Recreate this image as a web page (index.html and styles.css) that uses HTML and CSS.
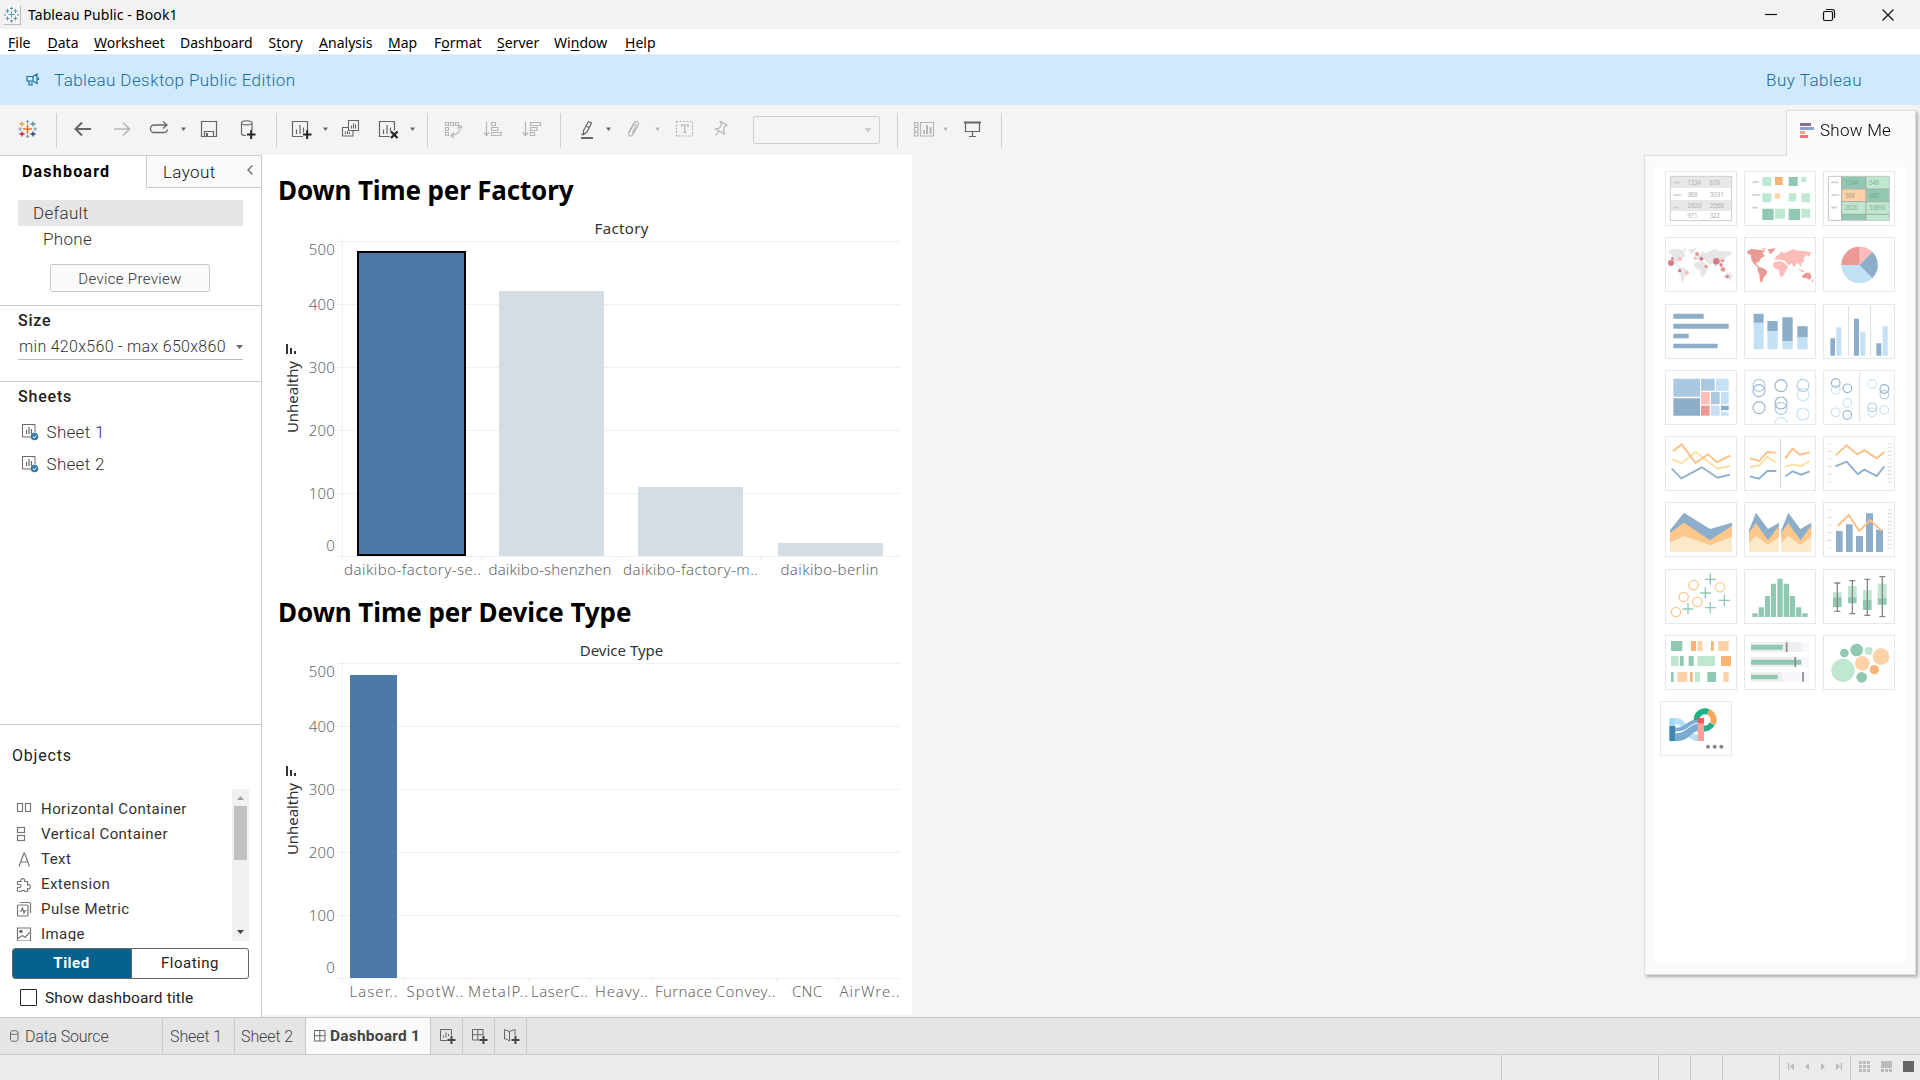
FILE: index.html
```
<!DOCTYPE html>
<html lang="en">
<head>
<meta charset="utf-8">
<title>Tableau Public - Book1</title>
<link rel="stylesheet" href="styles.css">
</head>
<body>
<svg width="0" height="0" class="defs">
  <defs>
    <path id="americas" d="M10 42L22 36 45 38 64 41 55 48 63 57 52 63 46 72 47 76 38 75 37 82 46 90 42 92 30 80 22 68 21 54 10 50ZM50 35L66 34 62 38ZM70 37L95 34 88 44 78 52 74 42ZM42 90L56 92 70 102 66 114 58 122 54 138 48 132 46 112 40 100Z"/>
    <path id="oldworld" d="M92 68L96 58 106 52 112 42 120 48 130 44 150 36 160 41 178 42 203 46 198 52 196 60 188 54 180 62 180 74 172 78 170 90 164 80 158 78 150 92 142 78 136 86 128 78 120 70 108 68ZM90 76L110 72 124 80 132 90 124 106 116 119 109 119 104 98 90 92 86 84ZM162 94L172 104 184 106 180 102 168 96Z"/>
    <path id="oceania" d="M174 116L188 106 192 110 196 105 203 120 196 129 188 123 176 123ZM206 126L209 130 202 137Z"/>
    <g id="mark" fill="none" stroke-width="1.3">
      <path d="M27.5 124.500v9M23 129h9" stroke="#e8762c" stroke-width="1.700"/>
      <path d="M22 121.500v5M19.500 124h5" stroke="#e5a04c"/><path d="M33 121.500v5M30.500 124h5" stroke="#59879b"/>
      <path d="M22 131.500v5M19.500 134h5" stroke="#c72035"/><path d="M33 131.500v5M30.500 134h5" stroke="#1f457e"/>
      <path d="M27.500 120v3.500M25.800 121.700h3.500M27.500 134.500v3.500M25.800 136.300h3.500M20 127.300v3.500M18.500 129h3.500M35 127.300v3.500M33.500 129h3.500" stroke="#7199a6" stroke-width="1"/>
    </g>
    <g id="sheetIcon">
      <path d="M32 438h-9.500v-12.500h12.500v8" fill="none" stroke="#666"/>
      <path d="M26.500 431v4M29 428v7M31.500 430v5" stroke="#666" stroke-width="1.200"/>
      <circle cx="34.500" cy="437.500" r="3.800" fill="#3a7ca5"/><path d="M32.700 437.500l1.400 1.400 2.400-2.600" fill="none" stroke="#fff"/>
    </g>
    <path id="plus" d="M0 4.500h8M4 .5v8" stroke="#444" stroke-width="2"/>
  </defs>
</svg>

<header class="titlebar">
  <svg class="app-icon" width="18" height="20" viewBox="0 0 18 20"><rect width="17" height="19" fill="#f5f5f5"/><path d="M17.500 1v18.500H1" fill="none" stroke="#bbb"/><path d="M8.500 6.500v6M5.500 9.500h6M4.500 4v4M2.500 6h4M12.500 4v4M10.500 6h4M4.500 11.500v4M2.500 13.500h4M12.500 11.500v4M10.500 13.500h4M8.500 2v2.500M7 3.500h3M8.500 15v2.500M7 16h3M2 8.500v2.500M15 8.500v2.500" stroke="#5797b8" fill="none"/></svg>
  <span class="title">Tableau Public - Book1</span>
  <svg class="window-controls" width="155" height="28" viewBox="1765 0 155 28" fill="none" stroke="#111" stroke-width="1.200"><path d="M1765 13.500h12"/><rect x="1823.500" y="10.500" width="9" height="9" rx="1.500"/><path d="M1826 8.500h6a2.500 2.500 0 0 1 2.500 2.500v6"/><path d="M1882.500 8.500l11 11M1893.500 8.500l-11 11"/></svg>
</header>

<nav class="menubar">
  <span style="width:39.500px"><u>F</u>ile</span><span style="width:46.500px"><u>D</u>ata</span><span style="width:86px"><u>W</u>orksheet</span><span style="width:88.500px">Dash<u>b</u>oard</span><span style="width:50.500px">S<u>t</u>ory</span><span style="width:69px"><u>A</u>nalysis</span><span style="width:46px"><u>M</u>ap</span><span style="width:63px">F<u>o</u>rmat</span><span style="width:57px"><u>S</u>erver</span><span style="width:71px">Wi<u>n</u>dow</span><span><u>H</u>elp</span>
</nav>

<div class="banner">
  <svg width="14" height="14" viewBox="0 0 14 14" fill="none" stroke="#1b6f96" stroke-width="1.200"><path d="M1 3.500h6l4-2.500v9.500l-4-2.500H1zM3 8.500v3.500h3v-3M7 3.500v5M12.500 4.500v2.500"/></svg>
  <span class="banner-name">Tableau Desktop Public Edition</span>
  <span class="buy">Buy Tableau</span>
</div>

<div class="toolbar">
  <div class="group"><svg width="56" height="35" viewBox="0 113 56 35"><use href="#mark"/></svg></div>
  <div class="group">
    <svg width="45" height="35" viewBox="57 113 45 35" fill="none" stroke="#666" stroke-width="2"><path d="M75.500 129H91M82 122.500l-6.500 6.500 6.500 6.500"/></svg>
    <svg width="38" height="35" viewBox="102 113 38 35" fill="none" stroke="#b5b5b5" stroke-width="1.600"><path d="M114 129h15.500M123 122.500l6.500 6.500-6.500 6.500"/></svg>
    <svg width="52" height="35" viewBox="140 113 52 35" fill="none" stroke="#666" stroke-width="1.300"><path d="M165 132.500h-11a3.500 3.500 0 0 1-3.500-3.500v-.5a3.500 3.500 0 0 1 3.500-3.500h12.500M163 121.500l4 3.500-4 3.500M165 132.500a3.500 3.500 0 0 0 2.500-3"/><path d="M181 127.500h5l-2.500 3.500z" fill="#666" stroke="none"/></svg>
    <svg width="36" height="35" viewBox="192 113 36 35" fill="none" stroke="#666" stroke-width="1.200"><path d="M201.500 121.500h15v15h-15zM204.500 136.500v-5h9v5"/><path d="M207 133v3" stroke-width="2"/></svg>
    <svg width="48" height="35" viewBox="228 113 48 35" fill="none" stroke="#666" stroke-width="1.200"><path d="M252 130v-7c0-3-10.500-3-10.500 0v10.500c0 1.500 2 2 4.500 2M241.500 123c0 2.500 10.500 2.500 10.500 0"/><path d="M247 134.500h8.500M251.200 130v9" stroke="#222" stroke-width="2"/></svg>
  </div>
  <div class="group">
    <svg width="57" height="35" viewBox="277 113 57 35" fill="none" stroke="#666" stroke-width="1.200"><path d="M303 136.500h-10.500v-15h15v9M296.500 129.500v4.500M300 125v9M303.500 127.500v5"/><path d="M303 134.500h8.500M307.200 130v9" stroke="#222" stroke-width="2"/><path d="M323 127.500h5l-2.500 3.500z" fill="#666" stroke="none"/></svg>
    <svg width="36" height="35" viewBox="334 113 36 35" fill="none" stroke="#666" stroke-width="1.100"><path d="M348.500 120.500h10v10h-10zM348 127.500h-5.500v8.500h10.500v-5M351.500 125.500v3M353.500 123.500v5M355.500 124.500v4M345.500 131.500v2.500M347.500 131v3M349.500 132v2"/></svg>
    <svg width="57" height="35" viewBox="370 113 57 35" fill="none" stroke="#666" stroke-width="1.200"><path d="M390 136.500h-10.500v-15h15v9M383.500 129.500v4.500M387 125v9M390.500 127.500v4"/><path d="M391 131.500l6.500 6.500M397.500 131.500l-6.500 6.500" stroke="#222" stroke-width="2.200"/><path d="M410 127.500h5l-2.500 3.500z" fill="#666" stroke="none"/></svg>
  </div>
  <div class="group">
    <svg width="46" height="35" viewBox="428 113 46 35" fill="none" stroke="#b5b5b5" stroke-width="1.100"><path d="M445.500 122.500h3v3h-3zM450.500 122.500h3v3h-3zM455.500 122.500h3v3h-3zM445.500 127.500h3v3h-3zM445.500 132.500h3v3h-3zM460.500 126c0 6-3 9-9 9.500M457.500 128.500l3-3 2 3M454 132.500l-3 3 3 2.500"/></svg>
    <svg width="38" height="35" viewBox="474 113 38 35" fill="none" stroke="#b5b5b5" stroke-width="1.200"><path d="M486.500 122v13M484 132.500l2.500 3 2.500-3M491.500 122.500h4v3h-4zM491.500 127.500h6.500v3h-6.500zM491.500 132.500h9.500v3h-9.500z"/></svg>
    <svg width="48" height="35" viewBox="512 113 48 35" fill="none" stroke="#b5b5b5" stroke-width="1.200"><path d="M525.500 122v13M523 132.500l2.500 3 2.500-3M530.500 122.500h10v3h-10zM530.500 127.500h6.500v3h-6.500zM530.500 132.500h4v3h-4z"/></svg>
  </div>
  <div class="group">
    <svg width="57" height="35" viewBox="561 113 57 35" fill="none" stroke="#666" stroke-width="1.200"><path d="M583.500 130.500l5-9 3 1.500-4.500 9-3.500 2.500zM586 126l3 1.500M584 133l-2.500 2"/><path d="M581 138h12" stroke-width="2"/><path d="M606 127.500h5l-2.500 3.500z" fill="#666" stroke="none"/></svg>
    <svg width="50" height="35" viewBox="618 113 50 35" fill="none" stroke="#b5b5b5" stroke-width="1.200"><path d="M628.500 132.500l5-9c2-4 6.500-1.500 4.500 2l-5 9c-2 3-5.500 1.500-4-1.500l4.500-8c1.500-2 3.500-.5 2.500 1l-4 7.500"/><path d="M655 127.500h5l-2.500 3.500z" fill="#b5b5b5" stroke="none"/></svg>
    <svg width="36" height="35" viewBox="668 113 36 35" fill="none" stroke="#b5b5b5" stroke-width="1.200"><path d="M676.500 121.500h16v14.500h-16z" stroke-dasharray="2 1.300"/><path d="M681.500 127v-2h6.500v2M684.700 125v7.500M683 132.500h3.500"/></svg>
    <svg width="36" height="35" viewBox="704 113 36 35" fill="none" stroke="#b5b5b5" stroke-width="1.200"><path d="M720.500 121.500l6.500 3.500-2 1-1.500 3.500 1 4.500-3.500-2-5.500-3 4-1 2-3.500zM719 131l-3.500 4.500"/></svg>
    <div class="fit-select"><svg width="8" height="5" viewBox="0 0 8 5"><path d="M.5 0h7L4 4.500z" fill="#ccc"/></svg></div>
  </div>
  <div class="group">
    <svg width="58" height="35" viewBox="898 113 58 35" fill="none" stroke="#b5b5b5" stroke-width="1.200"><path d="M914.500 122.500h3.500v3.500h-3.500zM914.500 127.500h3.500v3.500h-3.500zM914.500 132.500h3.500v3.500h-3.500zM920.500 122.500h13v13.500h-13z"/><path d="M924 130v4M927 125v9M930.500 127v7" stroke-width="2"/><path d="M943 127.500h5l-2.500 3.500z" fill="#b5b5b5" stroke="none"/></svg>
    <svg width="45" height="35" viewBox="956 113 45 35" fill="none" stroke="#666" stroke-width="1.200"><path d="M965.500 123v8.500h14V123M972.500 131.500v5M969 136.500h7"/><path d="M964 122.500h17" stroke-width="2"/></svg>
  </div>
</div>

<div class="workspace">
  <aside class="side">
    <div class="side-tabs"><div class="tab-on">Dashboard</div><div class="tab-off">Layout<svg width="7" height="10" viewBox="0 0 7 10" fill="none" stroke="#666" stroke-width="1.300"><path d="M5.500.5L1 5l4.500 4.500"/></svg></div></div>
    <section class="devices">
      <div class="device on">Default</div><div class="device phone">Phone</div>
      <div class="preview">Device Preview</div>
    </section>
    <section class="size"><h3>Size</h3><div class="size-select">min 420x560 - max 650x860<svg width="7" height="4" viewBox="0 0 7 4"><path d="M0 0h7L3.500 4z" fill="#666"/></svg></div></section>
    <section class="sheets"><h3>Sheets</h3>
      <div class="sheet"><svg width="18" height="18" viewBox="21 424 18 18"><use href="#sheetIcon"/></svg>Sheet 1</div>
      <div class="sheet"><svg width="18" height="18" viewBox="21 424 18 18"><use href="#sheetIcon"/></svg>Sheet 2</div>
    </section>
    <section class="objects"><h3>Objects</h3>
      <div class="object-list">
        <div class="items">
          <div><svg width="16" height="16" viewBox="0 0 16 16"><rect x="1.500" y="2.500" width="5" height="8"/><rect x="9.500" y="2.500" width="5" height="8"/></svg>Horizontal Container</div>
          <div><svg width="16" height="16" viewBox="0 0 16 16"><rect x="1.500" y="1.500" width="7" height="5"/><rect x="1.500" y="9.500" width="7" height="5"/></svg>Vertical Container</div>
          <div><svg width="16" height="16" viewBox="0 0 16 16"><path d="M3 15.500L8 2h.5l5 13.500M4.800 11h7"/></svg>Text</div>
          <div><svg width="16" height="16" viewBox="0 0 16 16"><path d="M1.500 15V11.500h2a1.500 1.500 0 1 0 0-3h-2V5.500h3.500a2 2 0 1 1 3.500 0h3v3.500a2 2 0 1 1 0 3.500V15.500H9a2 2 0 0 0-3.500 0z"/></svg>Extension</div>
          <div><svg width="16" height="16" viewBox="0 0 16 16"><path d="M4 1.500h9.500q1 0 1 1V12M2.500 4H11q1 0 1 1v9q0 1-1 1H2.500q-1 0-1-1V5q0-1 1-1zM3.500 10h1.800l1.200-3 1.500 5 1-2.500h1.500"/></svg>Pulse Metric</div>
          <div><svg width="16" height="16" viewBox="0 0 16 16"><path d="M1.500 2h13v13h-13zM2 12.500L6.500 9.500l2.500 2 4.500-5"/><circle cx="5" cy="5.500" r="1.200" fill="#666"/></svg>Image</div>
        </div>
        <div class="scroll"><svg width="7" height="4" viewBox="0 0 7 4"><path d="M0 4h7L3.500 0z" fill="#a0a0a0"/></svg><div class="thumb"></div><svg width="7" height="4" viewBox="0 0 7 4"><path d="M0 0h7L3.500 4z" fill="#444"/></svg></div>
      </div>
      <div class="mode"><div class="tiled">Tiled</div><div class="floating">Floating</div></div>
      <label class="show-title"><span class="box"></span>Show dashboard title</label>
    </section>
  </aside>

  <main class="dashboard">
    <svg class="viz" width="650" height="428" viewBox="262 155 650 428">
      <text class="viz-title" x="278" y="200" textLength="295.500">Down Time per Factory</text>
      <text class="head" x="621.500" y="234" textLength="54">Factory</text>
      <path class="grid" d="M337 241.500H900M337 304.500H900M337 367.500H900M337 430.500H900M337 493.500H900M337 556.500H900M342.500 238V560M481.500 556V560M621.500 556V560M760.500 556V560"/>
      <rect x="358" y="252" width="107" height="303" fill="#4e79a7" stroke="#000" stroke-width="2"/>
      <rect x="499" y="291" width="105" height="265" fill="#d5dde4"/><rect x="638" y="487" width="105" height="69" fill="#d5dde4"/><rect x="778" y="543" width="105" height="13" fill="#d5dde4"/>
      <g class="ticks"><text x="335" y="255">500</text><text x="335" y="310">400</text><text x="335" y="373">300</text><text x="335" y="436">200</text><text x="335" y="499">100</text><text x="335" y="551">0</text></g>
      <text class="axis" transform="translate(298 433) rotate(-90)" textLength="72">Unhealthy</text><path d="M287 344v10M291 348v6M295 351v3" stroke="#333" stroke-width="2"/>
      <g class="labels"><text x="412.500" y="575" textLength="137">daikibo-factory-se..</text><text x="550" y="575" textLength="123">daikibo-shenzhen</text><text x="690.500" y="575" textLength="135">daikibo-factory-m..</text><text x="829.500" y="575" textLength="98">daikibo-berlin</text></g>
    </svg>
    <svg class="viz" width="650" height="432" viewBox="262 161 650 432">
      <text class="viz-title" x="278" y="200" textLength="353.500">Down Time per Device Type</text>
      <text class="head" x="621.500" y="234" textLength="83.500">Device Type</text>
      <path class="grid" d="M337 241.500H900M337 304.500H900M337 367.500H900M337 430.500H900M337 493.500H900M337 556.500H900M342.500 238V560M404.500 556V560M466.500 556V560M528.500 556V560M590.500 556V560M652.500 556V560M714.500 556V560M776.500 556V560M838.500 556V560"/>
      <rect x="350" y="253" width="47" height="303" fill="#4e79a7"/>
      <g class="ticks"><text x="335" y="255">500</text><text x="335" y="310">400</text><text x="335" y="373">300</text><text x="335" y="436">200</text><text x="335" y="499">100</text><text x="335" y="551">0</text></g>
      <text class="axis" transform="translate(298 433) rotate(-90)" textLength="72">Unhealthy</text><path d="M287 344v10M291 348v6M295 351v3" stroke="#333" stroke-width="2"/>
      <g class="labels"><text x="373.500" y="575" textLength="48">Laser..</text><text x="435" y="575" textLength="57">SpotW..</text><text x="498" y="575" textLength="60">MetalP..</text><text x="559.500" y="575" textLength="57">LaserC..</text><text x="621.500" y="575" textLength="53">Heavy..</text><text x="683.500" y="575" textLength="57">Furnace</text><text x="745.500" y="575" textLength="60">Convey..</text><text x="807" y="575" textLength="30">CNC</text><text x="869.500" y="575" textLength="60">AirWre..</text></g>
    </svg>
  </main>
</div>

<aside class="showme">
  <div class="showme-tab"><svg width="14" height="15" viewBox="0 0 14 15"><path d="M0 0h11v3H0z" fill="#8a6d9b"/><path d="M0 4h14v3H0z" fill="#7fa8d1"/><path d="M0 8h5v3H0z" fill="#f2a47c"/><path d="M0 12h8v3H0z" fill="#fa6e7c"/></svg><span>Show Me</span></div>
  <div class="showme-panel"><div class="gallery">
    <svg viewBox="0 0 216 165"><rect x="16" y="16" width="184" height="133" fill="#fff" stroke="#ccc" stroke-width="3"/><path d="M18 18h180v33H18zM18 87h180v33H18z" fill="#e8e8e8"/><path d="M25 34h20M25 72h24M25 110h16" stroke="#ccc" stroke-width="5"/><g class="cell"><text x="67" y="42" textLength="40">1234</text><text x="134" y="42">678</text><text x="67" y="77">368</text><text x="134" y="77" textLength="42">3031</text><text x="67" y="112" textLength="42">2620</text><text x="134" y="112" textLength="42">2568</text><text x="67" y="142">971</text><text x="134" y="142">322</text></g></svg>
    <svg viewBox="0 0 216 165"><path d="M25 33h20M25 72h24M25 110h16" stroke="#ccc" stroke-width="5"/><path d="M55 18h27v27H55zM172 18h14v15h-14zM55 67h27v27H55zM134 67h23v24h-23zM172 67h26v27h-26zM93 113h30v30H93zM172 113h26v27h-26z" fill="#c0e8d1"/><path d="M134 18h27v27h-27zM55 113h34v34H55zM134 113h34v34h-34z" fill="#90c9b1"/><path d="M93 18h23v24H93z" fill="#f6b577"/><path d="M93 67h15v16H93z" fill="#fed2a6"/></svg>
    <svg viewBox="0 0 216 165"><path d="M57 16h72v37H57zM130 54h69v37h-69zM57 130h72v17H57z" fill="#90c9b1"/><path d="M130 16h69v37h-69zM57 92h72v37H57zM130 92h69v55h-69z" fill="#c0e8d1"/><path d="M57 54h72v37H57z" fill="#fed2a6"/><path d="M16 16h183v132H16z" fill="none" stroke="#c4c4c4" stroke-width="3"/><path d="M56 16v132M129 16v132M56 54h143M56 92h143M56 130h143" fill="none" stroke="#9fa8a3" stroke-width="3"/><path d="M25 34h20M25 72h24M25 110h16" stroke="#ccc" stroke-width="5"/><g class="cell green"><text x="65" y="41">1234</text><text x="138" y="41">546</text><text x="65" y="81">368</text><text x="138" y="81">380</text><text x="65" y="118">2620</text><text x="138" y="118">53890</text></g></svg>

    <svg viewBox="0 0 216 165"><g fill="#e6e6e6"><use href="#americas"/><use href="#oldworld"/><use href="#oceania"/></g><g fill="#d87a87"><circle cx="18" cy="78" r="9"/><circle cx="22" cy="65" r="4"/><circle cx="44" cy="101" r="5"/><circle cx="109" cy="65" r="6"/><circle cx="154" cy="73" r="10"/><circle cx="168" cy="84" r="5"/><circle cx="187" cy="119" r="5"/></g><g fill="#eb9995"><circle cx="96" cy="51" r="6"/><circle cx="123" cy="88" r="5"/><circle cx="172" cy="71" r="5"/><circle cx="174" cy="97" r="7"/></g><g fill="#fdbcb9"><circle cx="45" cy="65" r="6"/><circle cx="66" cy="107" r="6"/><circle cx="90" cy="64" r="5"/></g></svg>
    <svg viewBox="0 0 216 165"><use href="#americas" fill="#eb9995"/><use href="#oldworld" fill="#fdbcb9"/><use href="#oceania" fill="#eb9995"/></svg>
    <svg viewBox="0 0 216 165"><circle cx="110" cy="84" r="55" fill="#c4e0f5"/><path d="M110 84V29a55 55 0 0 0-55 55z" fill="#eb9995"/><path d="M110 84V29a55 55 0 0 1 38 16z" fill="#fdbcb9"/><path d="M110 84l38-39a55 55 0 0 1 0 78z" fill="#8daeca"/></svg>

    <svg viewBox="0 0 216 165"><path d="M25 29h91v15H25zM25 59h166v15H25zM25 89h46v14H25zM25 119h133v14H25z" fill="#8daeca"/></svg>
    <svg viewBox="0 0 216 165"><path d="M29 55h30v81H29zM70 81h31v55H70zM115 111h31v25h-31zM160 100h31v36h-31z" fill="#c4e0f5"/><path d="M29 29h30v27H29zM70 51h31v30H70zM115 40h31v71h-31zM160 67h31v33h-31z" fill="#8daeca"/></svg>
    <svg viewBox="0 0 216 165"><path d="M77 6v149M143 6v149" stroke="#ddd" stroke-width="3"/><path d="M22 103h14v52H22zM93 44h15v111H93zM160 118h15v37h-15z" fill="#8daeca"/><path d="M40 70h15v85H40zM112 85h15v70h-15zM179 67h15v88h-15z" fill="#c4e0f5"/></svg>

    <svg viewBox="0 0 216 165"><path d="M25 26h80v54H25zM108 26h41v36h-41zM138 66h26v37h-26z" fill="#aac8e0"/><path d="M25 85h80v52H25zM168 107h23v14h-23z" fill="#8daeca"/><path d="M153 26h38v36h-38zM168 66h23v37h-23zM138 107h26v30h-26zM168 126h23v11h-23z" fill="#c4e0f5"/><path d="M108 66h26v37h-26z" fill="#ffc0bd"/><path d="M108 107h26v30h-26z" fill="#eb9995"/></svg>
    <svg class="rings" viewBox="0 0 216 165"><g stroke="#c4e0f5"><circle cx="177" cy="74" r="18"/><circle cx="177" cy="132" r="18"/><path d="M93 160a18 18 0 0 1 36 0"/></g><g stroke="#a9c9df"><circle cx="45" cy="46" r="18"/><circle cx="111" cy="115" r="18"/><circle cx="177" cy="46" r="18"/></g><g stroke="#8daeca"><circle cx="45" cy="62" r="18"/><circle cx="45" cy="113" r="18"/><circle cx="111" cy="47" r="18"/><circle cx="111" cy="99" r="18"/></g></svg>
    <svg class="rings" viewBox="0 0 216 165"><path d="M110 7v149" stroke="#ddd" stroke-width="3"/><g stroke="#c4e0f5"><circle cx="38" cy="59" r="13"/><circle cx="73" cy="99" r="13"/><circle cx="38" cy="127" r="13"/><circle cx="148" cy="42" r="13"/><circle cx="148" cy="127" r="13"/><circle cx="184" cy="120" r="13"/></g><g stroke="#a9c9df"><circle cx="184" cy="74" r="13"/><circle cx="148" cy="112" r="13"/></g><g stroke="#8daeca"><circle cx="38" cy="39" r="13"/><circle cx="73" cy="55" r="13"/><circle cx="73" cy="135" r="13"/><circle cx="184" cy="57" r="13"/></g></svg>

    <svg class="lines" viewBox="0 0 216 165"><path d="M22 70l28 11 42-33 65 50 38-8" stroke="#fbdf9f"/><path d="M24 46l26-21 42 56 37-26 27 24 39-20" stroke="#fdbf83"/><path d="M20 98l29 29 62-33 47 31 37-9" stroke="#8fb0cc"/></svg>
    <svg class="lines" viewBox="0 0 216 165"><path class="rule" d="M110 7v149"/><path d="M18 93l27-4 25-27 25 17M121 93l25-8 25 5 26-15" stroke="#fbdf9f"/><path d="M18 67l27 8 25-27 27 2M124 67l22-29 22 18 29-7" stroke="#fdbf83"/><path d="M18 121l27 7 25-23h27M124 121l22-15 25 10 26-10" stroke="#8fb0cc"/></svg>
    <svg class="lines" viewBox="0 0 216 165"><path d="M38 58l33-30 32 27 21-12 37 24 23-19" stroke="#fdbf83"/><path d="M37 91l34-14 33 37 20-13 37 19 23-29" stroke="#8fb0cc"/><path class="rule" d="M14 24h11M14 46h11M14 69h11M14 92h11M14 115h11M14 138h11M194 24h12M194 35h12M194 46h12M194 58h12M194 69h12M194 81h12M194 92h12M194 104h12M194 115h12M194 127h12M194 138h12"/></svg>

    <svg viewBox="0 0 216 165"><path d="M15 84l42-52 78 49 66-19v20l-66 40-78-45-42 30z" fill="#8daeca"/><path d="M15 92l42-30 78 53 66-44v38l-66 22-78-18-42 20z" fill="#fbc78a"/><path d="M15 122l42-20 78 27 66-25v46H15z" fill="#fbe9cb"/></svg>
    <svg viewBox="0 0 216 165"><path d="M15 84l21-52 36 49 33-19v20l-33 40-36-50-21 35z" fill="#8daeca"/><path d="M15 92l21-29 36 52 33-44v38l-33 25-36-25-21 30z" fill="#fbc78a"/><path d="M15 122l21-20 36 27 33-25v46H15z" fill="#fbe9cb"/><path d="M112 84l21-52 36 49 33-19v20l-33 40-36-50-21 35z" fill="#8daeca"/><path d="M112 92l21-29 36 52 33-44v38l-33 25-36-25-21 30z" fill="#fbc78a"/><path d="M112 122l21-20 36 27 33-25v46h-90z" fill="#fbe9cb"/></svg>
    <svg class="lines" viewBox="0 0 216 165"><path d="M39 87h20v63H39zM69 67h20v83H69zM99 102h21v48H99zM129 34h21v116h-21zM159 83h21v67h-21z" fill="#8daeca"/><path d="M44 72l33-33 32 48 32-32 34 31" stroke="#fdbf83"/><path class="rule" d="M14 24h11M14 46h11M14 69h11M14 92h11M14 115h11M14 138h11M194 24h12M194 35h12M194 46h12M194 58h12M194 69h12M194 81h12M194 92h12M194 104h12M194 115h12M194 127h12M194 138h12"/></svg>

    <svg viewBox="0 0 216 165" fill="none" stroke-width="4"><g stroke="#fcc993"><circle cx="33" cy="129" r="14"/><circle cx="56" cy="84" r="14"/><circle cx="86" cy="48" r="14"/><circle cx="97" cy="99" r="14"/><circle cx="165" cy="55" r="14"/></g><path d="M136 14v34M120 31h33M121 55v34M105 72h33M178 77v34M161 94h34M69 102v34M52 120h33M136 99v34M120 116h33" stroke="#90c9b1" stroke-width="4"/></svg>
    <svg viewBox="0 0 216 165"><path d="M25 133h16v11H25zM44 115h16v29H44zM63 81h15v63H63zM81 44h15v100H81zM100 29h16v115h-16zM119 44h16v100h-16zM137 81h16v63h-16zM156 115h16v29h-16zM175 133h16v11h-16z" fill="#90c9b1"/></svg>
    <svg viewBox="0 0 216 165"><path d="M30 70h26v15H30zM75 51h26v34H75zM120 63h26v30h-26zM164 44h27v44h-27z" fill="#c0e8d1"/><path d="M30 85h26v29H30zM75 85h26v18H75zM120 93h26v30h-26zM164 88h27v19h-27z" fill="#90c9b1"/><path d="M43 42v85M34 42h18M34 127h18M88 35v99M79 35h18M79 134h18M133 31v108M124 31h18M124 139h18M178 23v120M169 23h18M169 143h18" stroke="#888" stroke-width="4"/></svg>

    <svg viewBox="0 0 216 165"><path d="M18 18h34v30H18zM45 63h11v30H45zM71 63h15v30H71zM18 111h8v30h-8zM127 111h26v30h-26z" fill="#90c9b1"/><path d="M18 63h23v30H18zM97 63h53v30H97zM90 111h15v30H90z" fill="#c0e8d1"/><path d="M78 18h15v30H78zM138 18h8v30h-8zM168 63h30v30h-30zM75 111h8v30h-8z" fill="#f6b577"/><path d="M97 18h15v30H97zM160 18h31v30h-31zM37 111h30v30H37zM175 111h16v30h-16z" fill="#fed2a6"/></svg>
    <svg viewBox="0 0 216 165"><path d="M21 22h174v29H21zM21 66h174v30H21zM21 111h174v29H21z" fill="#f6f8fb"/><path d="M21 22h151v29H21zM21 66h132v30H21zM21 111h94v29H21z" fill="#eee"/><path d="M21 29h95v15H21zM21 74h151v15H21zM21 119h80v14H21z" fill="#90c9b1"/><path d="M128 22v29M154 66v30M177 111v29" stroke="#888" stroke-width="5"/></svg>
    <svg viewBox="0 0 216 165"><g fill="#90c9b1"><circle cx="64" cy="54" r="13"/><circle cx="101" cy="45" r="19"/><circle cx="116" cy="127" r="16"/></g><g fill="#c0e8d1"><circle cx="60" cy="106" r="35"/><circle cx="137" cy="48" r="12"/></g><g fill="#fed2a6"><circle cx="118" cy="85" r="22"/><circle cx="174" cy="65" r="25"/></g><circle cx="154" cy="104" r="14" fill="#f6b577"/></svg>

    <svg class="more" viewBox="0 0 216 165"><path d="M46 60C80 60 80 112 116 112" fill="none" stroke="#b7dff5" stroke-width="18"/><path d="M46 86C82 88 82 60 116 60" fill="none" stroke="#79acd0" stroke-width="12"/><path d="M46 109C90 109 80 78 116 78" fill="none" stroke="#79acd0" stroke-width="24"/><path d="M46 93C84 96 84 68 116 66" fill="none" stroke="#fff" stroke-width="3"/><path d="M28 51h18v24H28z" fill="#a1d9f7"/><path d="M28 75h18v45H28z" fill="#3c87b3"/><g fill="none" stroke-width="18"><path d="M110 57a25 25 0 0 1 35-24M156 68a25 25 0 0 1-31 13" stroke="#27ae88"/><path d="M145 33a25 25 0 0 1 13 35" stroke="#fba55f"/></g><path d="M113 51h19v17h-19z" fill="#ee5a56"/><path d="M113 68h19v52h-19z" fill="#ffa09c"/><g fill="#888"><circle cx="144" cy="137" r="6"/><circle cx="164" cy="137" r="6"/><circle cx="184" cy="137" r="6"/></g></svg>
  </div></div>
</aside>

<div class="tabs">
  <div class="t source"><svg width="9" height="12" viewBox="0 0 9 12"><path d="M.5 2.500c0-2.500 7.500-2.500 7.500 0v7c0 2.500-7.500 2.500-7.500 0zM.5 3c0 2 7.500 2 7.500 0"/></svg>Data Source</div>
  <div class="t s1">Sheet 1</div><div class="t s2">Sheet 2</div>
  <div class="t active"><svg width="12" height="12" viewBox="0 0 12 12"><path d="M.5.5h10.500v10.500H.5zM5.800.5V11M.5 5.700H11"/></svg>Dashboard 1</div>
  <div class="t new"><svg width="16" height="16" viewBox="0 0 16 16"><path d="M7.500 11.500h-7v-11h11v6M3.500 6.500v2M6 3.500v5M8.500 5v2"/><use href="#plus" x="7.500" y="6.500"/></svg></div>
  <div class="t new"><svg width="16" height="16" viewBox="0 0 16 16"><path d="M7.500 11h-7V.5h10.500v6M5.800.5V11M.5 5.700H11"/><use href="#plus" x="7.500" y="6.500"/></svg></div>
  <div class="t new"><svg width="16" height="16" viewBox="0 0 16 16"><path d="M5.500 2.500L.5.500v9.500h2l3 2V2.500L11 .5v6"/><use href="#plus" x="7.500" y="6.500"/></svg></div>
</div>

<footer class="status">
  <i style="width:1502px"></i><i style="width:157px"></i><i style="width:32px"></i><i style="width:32px"></i><i style="width:57px"></i><i style="width:71px"><svg width="70" height="25" viewBox="1780 1055 70 25" fill="#bbb"><path d="M1788 1063h1.300v7h-1.300zM1794 1063v7l-4-3.500zM1809 1063v7l-4-3.500zM1821 1063v7l4-3.500zM1836 1063v7l4-3.500zM1840.700 1063h1.300v7h-1.300z"/></svg></i>
  <svg width="69" height="25" viewBox="1851 1055 69 25" fill="#bbb"><path d="M1859 1061h3v3h-3zM1863 1061h3v3h-3zM1867 1061h3v3h-3zM1859 1065h3v3h-3zM1863 1065h3v3h-3zM1867 1065h3v3h-3zM1859 1069h3v3h-3zM1863 1069h3v3h-3zM1867 1069h3v3h-3zM1881 1061h11v7h-11zM1881 1069h3v3h-3zM1885 1069h3v3h-3zM1889 1069h3v3h-3z"/><path d="M1903 1061h11v11h-11z" fill="#666"/></svg>
</footer>
</body>
</html>
```
FILE: styles.css
```
* { box-sizing: border-box; }
body { margin: 0; width: 1920px; height: 1080px; overflow: hidden; position: relative; display: flex; flex-direction: column; background: #f4f4f4; color: #333; font-family: Roboto, "Open Sans", sans-serif; font-weight: 300; letter-spacing: .3px; white-space: nowrap; }
svg { display: block; flex: none; }
.defs { position: absolute; }
h3 { margin: 0; font-weight: 500; font-size: 16px; letter-spacing: .8px; color: #222; }

.titlebar { height: 29px; flex: none; display: flex; align-items: center; background: #f2f2f2; font: 14px "Noto Sans", sans-serif; letter-spacing: .08px; color: #000; }
.app-icon { margin: 0 7px 0 3px; }
.title { padding-bottom: 1px; }
.window-controls { margin-left: auto; }
.menubar { height: 26px; flex: none; display: flex; padding-left: 8px; background: #fff; border-bottom: 1px solid #eee; font: 14px/27px "Noto Sans", sans-serif; letter-spacing: .02px; color: #000; }
.menubar u { text-underline-offset: 2px; }
.banner { height: 50px; flex: none; display: flex; align-items: center; padding: 0 58px 0 26px; background: #cfe9ff; color: #1b6f96; font-size: 17px; letter-spacing: .42px; }
.banner-name { margin-left: 14px; }
.buy { margin-left: auto; letter-spacing: .5px; }

.toolbar { height: 50px; flex: none; display: flex; align-items: center; padding-top: 1px; }
.group { height: 35px; display: flex; border-right: 1px solid #d0d0d0; }
.fit-select { width: 127px; height: 28px; margin: 3px 17px 0 13px; border: 1px solid #d0d0d0; border-radius: 2px; display: flex; align-items: center; justify-content: flex-end; padding-right: 7px; }

.workspace { flex: 1; display: flex; min-height: 0; }
.side { width: 262px; display: flex; flex-direction: column; background: #fff; border-right: 1px solid #ccc; border-top: 1px solid #ccc; }
.side-tabs { height: 32px; flex: none; display: flex; }
.tab-on { width: 146px; padding-left: 22px; font-size: 16px; line-height: 31px; font-weight: 700; letter-spacing: 1.200px; color: #000; }
.tab-off { flex: 1; display: flex; align-items: center; justify-content: space-between; padding: 0 7px 0 16px; border-left: 1px solid #ccc; border-bottom: 1px solid #ccc; background: #fafafa; font-size: 17px; letter-spacing: .37px; color: #111; }
.tab-off svg { margin-bottom: 3px; }
.side section { border-bottom: 1px solid #ccc; flex: none; }
.side .devices { height: 118px; padding: 12px 18px 0; }
.device { height: 26px; line-height: 26px; padding-left: 15px; font-size: 17px; }
.device.on { background: #e6e6e6; }
.device.phone { padding-left: 25px; }
.preview { width: 160px; height: 28px; margin: 12px 0 0 32px; border: 1px solid #c8c8c8; border-radius: 2px; background: #fafafa; text-align: center; font-size: 15px; line-height: 28px; letter-spacing: .35px; }
.side .size { height: 76px; padding: 0 18px; }
.size h3, .sheets h3 { line-height: 29px; }
.size-select { height: 25px; display: flex; align-items: center; justify-content: space-between; padding: 0 0 1px 1px; border-bottom: 1px solid #bbb; font-size: 16px; letter-spacing: .3px; }
.side .sheets { height: 343px; padding-left: 18px; }
.sheets h3 { margin-bottom: 5px; }
.sheet { height: 32px; display: flex; align-items: center; gap: 7.500px; padding-left: 3px; font-size: 17px; }
.side .objects { flex: 1; border: 0; padding: 0 12px; }
.objects h3 { line-height: 61px; height: 64px; font-weight: 400; }
.object-list { height: 152px; display: flex; justify-content: space-between; overflow: hidden; }
.items { padding: 7px 0 0 4px; font-size: 15px; letter-spacing: .43px; font-weight: 400; color: #333; }
.items div { height: 25px; display: flex; align-items: center; gap: 9px; }
.items svg { fill: none; stroke: #777; stroke-width: 1.200; }
.scroll { width: 17px; height: 152px; padding: 7px 0; display: flex; flex-direction: column; align-items: center; background: #f1f1f1; }
.thumb { width: 13px; height: 54px; margin: 6px 0 auto; background: #c1c1c1; }
.mode { height: 31px; margin-top: 7px; display: flex; border: 1px solid #666; border-radius: 3px; overflow: hidden; font-size: 15px; line-height: 28px; text-align: center; color: #222; font-weight: 400; letter-spacing: .5px; }
.tiled { width: 120px; margin: -1px 0 -1px -1px; line-height: 30px; background: #04628c; color: #fff; font-weight: 700; border-right: 1px solid #666; }
.floating { flex: 1; }
.show-title { height: 38px; display: flex; align-items: center; gap: 8px; padding: 0 0 1px 8px; font-size: 15.500px; color: #222; font-weight: 400; letter-spacing: .15px; }
.box { width: 17px; height: 17px; border: 1px solid #222; border-radius: 1px; }

.dashboard { width: 650px; height: 860px; background: #fff; }
.viz { font: 300 15px "Noto Sans", sans-serif; letter-spacing: 0; }
.viz-title { font-size: 26px; font-weight: 700; fill: #000; }
.head { font-weight: 400; text-anchor: middle; fill: #333; }
.grid { stroke: #f0f0f0; fill: none; }
.ticks { text-anchor: end; fill: #666; letter-spacing: .2px; }
.labels { text-anchor: middle; fill: #666; }
.axis { font-weight: 400; fill: #333; }

/* Floating chart picker over the canvas */
.showme { position: absolute; left: 1644px; top: 110px; width: 272px; height: 865px; display: flex; flex-direction: column; align-items: flex-end; filter: drop-shadow(2px 2px 1.500px rgba(0,0,0,.28)); }
.showme-tab { width: 130px; height: 46px; flex: none; display: flex; align-items: center; gap: 6px; padding: 0 0 6px 13px; margin-bottom: -1px; z-index: 1; background: #fafafa; border: 1px solid #ddd; border-bottom: 0; font-size: 17px; color: #000; letter-spacing: .25px; }
.showme-tab span { padding-bottom: 2px; }
.showme-panel { width: 272px; flex: 1; padding: 11px 10px 10px; background: #fafafa; border: 1px solid #ddd; }
.gallery { height: 100%; padding: 4px 10px; background: #fff; display: grid; grid-template-columns: repeat(3, 72px); grid-auto-rows: 55px; gap: 11.300px 7px; align-content: start; }
.gallery svg { width: 72px; height: 55px; box-shadow: inset 0 0 0 1px #e8e8e8; }
.gallery .more { margin-left: -5px; }
.rings { fill: none; stroke-width: 3.500; opacity: .9; }
.lines { fill: none; stroke-width: 5.500; }
.lines .rule { stroke: #ddd; stroke-width: 3.500; }
.cell { font: 19px "Noto Sans", sans-serif; fill: #b0b0b0; letter-spacing: -1px; }
.cell.green { fill: #6f9a86; opacity: .7; }

.tabs { height: 38px; flex: none; display: flex; background: #e5e5e5; border-top: 1px solid #c8c8c8; border-bottom: 1px solid #ccc; font-size: 16px; letter-spacing: -.100px; color: #444; }
.tabs svg { fill: none; stroke: #666; }
.t { display: flex; align-items: center; border-right: 1px solid #c8c8c8; }
.source { width: 163px; padding: 1px 0 0 10px; gap: 6px; letter-spacing: -.2px; }
.source svg { margin-bottom: 2px; }
.s1 { width: 72px; padding: 1px 0 0 7px; }
.s2 { width: 71px; padding: 1px 0 0 6px; }
.active { width: 125px; padding-left: 8px; gap: 4px; background: #fafafa; font-size: 15.500px; font-weight: 700; letter-spacing: .2px; }
.new { width: 32px; padding: 1px 0 0 9px; }
.status { height: 25px; flex: none; display: flex; background: #ebebeb; }
.status i { border-right: 1px solid #c8c8c8; }
```
